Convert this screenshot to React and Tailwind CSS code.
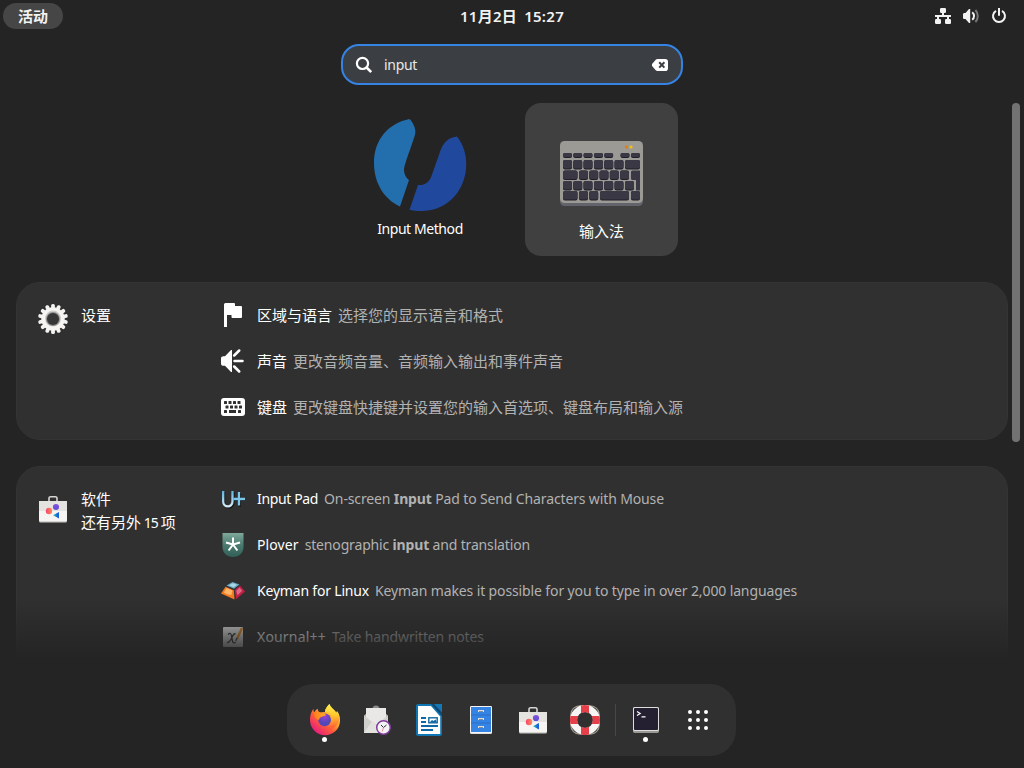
const FONT = "font-['Noto_Sans','Noto_Sans_CJK_SC',sans-serif]";

function SearchIcon() {
  return (
    <svg width="18" height="18" viewBox="0 0 18 18" fill="none" stroke="#fff" className="shrink-0">
      <circle cx="7.5" cy="7.4" r="5.6" strokeWidth="2.2" />
      <path d="M11.6 11.5 16.2 16.1" strokeWidth="2.6" />
    </svg>
  );
}

function ClearIcon() {
  return (
    <svg width="16" height="12" viewBox="0 0 16 12" className="shrink-0">
      <path d="M5.6 0h7.6A2.8 2.8 0 0 1 16 2.8v6.4a2.8 2.8 0 0 1-2.8 2.8H5.6a3 3 0 0 1-2.1-.9L.5 7.6a2 2 0 0 1 0-3.2l3-3.5A3 3 0 0 1 5.6 0Z" fill="#fff" />
      <path d="m7.2 3.2 5.2 5.4m0-5.4L7.2 8.6" stroke="#3b3e43" strokeWidth="2" />
    </svg>
  );
}

function NetworkIcon() {
  return (
    <svg width="16" height="16" viewBox="0 0 16 16" fill="#f2f2f2">
      <rect x="5" y="0" width="6" height="5" rx="1.2" />
      <path d="M7 4h2v3h7v2h-2v3h-2V9H4v3H2V9H0V7h7Z" />
      <rect x="0" y="11" width="6" height="5" rx="1.2" />
      <rect x="10" y="11" width="6" height="5" rx="1.2" />
    </svg>
  );
}

function VolumeIcon() {
  return (
    <svg width="16" height="16" viewBox="0 0 16 16" fill="none">
      <path d="M0 6.600C0 5.600.5 5 1.500 5H2.500L6 1h1.200v14H6L2.500 11h-1C.5 11 0 10.400 0 9.400Z" fill="#f2f2f2" />
      <path d="M9.200 4.200c2.400 2 2.400 5.600 0 7.600" stroke="#f2f2f2" strokeWidth="2" />
      <path d="M12.400 2c3.200 3.400 3.200 8.600 0 12" stroke="#777" strokeWidth="2" />
    </svg>
  );
}

function PowerIcon() {
  return (
    <svg width="16" height="16" viewBox="0 0 16 16" fill="none" stroke="#f2f2f2" strokeWidth="2">
      <path d="M5 2.900a6 6 0 1 0 6 0" />
      <path d="M8 .5V7" strokeLinecap="round" />
    </svg>
  );
}

function InputMethodIcon() {
  return (
    <svg width="96" height="96" viewBox="0 0 96 96">
      <path d="M37.500 3C41 6 44 13 43.300 17c-.4 5-11.300 31-11.300 37 0 4 2 8 5 10L28 90.500C12 83 2 67 2 47 2 23 17 7 37.500 3Z" fill="#236fae" />
      <path d="M85 20.500c6 7.500 9.200 17 9.200 27.500 0 25-17 46-43.200 47-5 .2-10-.3-13.500-1.200L46 69c7 .4 11-2.500 13.500-9L69 33c3-7 8.500-12 16-12.500Z" fill="#20499d" />
    </svg>
  );
}

const KEYS = [
  [3, 12, 9, 5], [13.200, 12, 9, 5], [23.500, 12, 9, 5], [34, 12, 9, 5], [44.200, 12, 9, 5], [60.500, 12, 9, 5], [71, 12, 9, 5],
  [3, 19, 9, 9.500], [13.200, 19, 9, 9.500], [23.500, 19, 9, 9.500], [34, 19, 9, 9.500], [44.200, 19, 9, 9.500], [54.500, 19, 9, 9.500], [65, 19, 15, 9.500],
  [3, 29.500, 14.500, 9.500], [19, 29.500, 9, 9.500], [29.200, 29.500, 9, 9.500], [39.500, 29.500, 9, 9.500], [49.800, 29.500, 9, 9.500], [60, 29.500, 9, 9.500],
  [3, 40, 9, 9.500], [13.200, 40, 9, 9.500], [23.500, 40, 9, 9.500], [34, 40, 9, 9.500], [44.200, 40, 9, 9.500], [54.500, 40, 9, 9.500], [65, 40, 9, 9.500],
  [3, 50, 14.500, 9.500], [19, 50, 9, 9.500], [29.200, 50, 9, 9.500], [40, 50, 29, 9.500], [71, 50, 9, 9.500],
];

function KeyboardAppIcon() {
  return (
    <svg width="83" height="66" viewBox="0 0 83 66">
      <rect y="4" width="83" height="61" rx="4.500" fill="#63636b" />
      <rect width="83" height="62" rx="4.500" fill="#9b9a95" />
      {KEYS.map(([x, y, w, h], i) => (
        <g key={i}>
          <rect x={x} y={y} width={w} height={h} rx="2" fill="#1f1d27" />
          <rect x={x} y={y} width={w} height={h - 1} rx="2" fill="#3a3844" />
        </g>
      ))}
      <path d="M72.500 29.500H80V49.500h-4V39H72.500a1.500 1.500 0 0 1-1.500-1.500V31a1.500 1.500 0 0 1 1.500-1.500Z" fill="#3a3844" />
      <circle cx="66.500" cy="6" r="1.600" fill="#f57900" />
      <circle cx="71" cy="6" r="1.600" fill="#f5c211" />
    </svg>
  );
}

function GearIcon() {
  const teeth = Array.from({ length: 14 }, (_, i) => i * (360 / 14));
  return (
    <svg width="32" height="32" viewBox="0 0 32 32">
      {teeth.map((a) => (
        <rect key={a} x="14.100" y="1" width="3.800" height="6" rx="1.600" fill="#f3f2f0" transform={`rotate(${a} 16 16)`} />
      ))}
      <circle cx="16" cy="16" r="11.700" fill="#f6f5f4" />
      <circle cx="16" cy="15.600" r="8" fill="#cfcdc9" />
      <circle cx="16" cy="16" r="7" fill="#8a898c" />
      <circle cx="16" cy="16.100" r="6" fill="#363636" />
    </svg>
  );
}

function SoftwareIcon() {
  return (
    <svg width="28" height="28" viewBox="0 0 28 28">
      <defs>
        <linearGradient id="sw-red"><stop stopColor="#f8466b" /><stop offset="1" stopColor="#ff8a58" /></linearGradient>
        <linearGradient id="sw-vio" x2="0" y2="1"><stop stopColor="#8352df" /><stop offset="1" stopColor="#604bd4" /></linearGradient>
        <linearGradient id="sw-blu"><stop stopColor="#25d0b2" /><stop offset=".7" stopColor="#1b63d6" /></linearGradient>
      </defs>
      <path d="M10 7V3A1.500 1.500 0 0 1 11.500 1.800h5A1.500 1.500 0 0 1 18 3V7" fill="none" stroke="#d5d4d1" strokeWidth="1.600" />
      <path d="M0 6h28v20a1.500 1.500 0 0 1-1.500 1.500h-25A1.500 1.500 0 0 1 0 26Z" fill="#c9c8c5" />
      <path d="M0 6h28v19a1.500 1.500 0 0 1-1.500 1.200h-25A1.500 1.500 0 0 1 0 25Z" fill="#f6f5f4" />
      <path d="M0 6h28v10H0Z" fill="#e4e3e0" />
      <circle cx="17" cy="12" r="3.100" fill="url(#sw-vio)" />
      <circle cx="10" cy="16" r="3.200" fill="url(#sw-red)" />
      <path d="M20 17v6.500l-6-3.300Z" fill="url(#sw-blu)" />
    </svg>
  );
}

function FlagIcon() {
  return (
    <svg width="24" height="24" viewBox="0 0 24 24" fill="#fff">
      <path d="M3 24V1.500A1.500 1.500 0 0 1 4.500 0H13a1 1 0 0 1 1 1v2h6a1 1 0 0 1 1 1v10a1 1 0 0 1-1 1h-8.500a1 1 0 0 1-1-1v-2H6v12Z" />
    </svg>
  );
}

function SoundIcon() {
  return (
    <svg width="24" height="24" viewBox="0 0 24 24" fill="#fff">
      <path d="M0 9.500C0 8 1 7.200 2.500 7.200H4l6-6.200h1v22h-1l-6-6.200H2.500C1 16.800 0 16 0 14.500Z" />
      <path d="m13.200 6.500 5-5M13.500 12h8M13.200 17.500l5 5" stroke="#fff" strokeWidth="2.500" strokeLinecap="round" />
    </svg>
  );
}

function KeyboardIcon() {
  const dots = [[3, 3], [7.500, 3], [12, 3], [16.500, 3], [4.500, 7.500], [9, 7.500], [13.500, 7.500], [18, 7.500], [3, 12], [17, 12]];
  return (
    <svg width="24" height="18" viewBox="0 0 24 18">
      <rect width="24" height="18" rx="3" fill="#fff" />
      {dots.map(([x, y]) => (
        <rect key={`${x}-${y}`} x={x} y={y} width="3" height="3" rx=".5" fill="#303030" />
      ))}
      <rect x="8" y="12" width="7" height="3" fill="#303030" />
    </svg>
  );
}

function InputPadIcon() {
  return (
    <svg width="24" height="24" viewBox="0 0 24 24" fill="none">
      <defs>
        <linearGradient id="pad" x2="0" y2="1"><stop stopColor="#5db5e0" /><stop offset="1" stopColor="#d4ecf8" /></linearGradient>
      </defs>
      <path d="M2.200 4v10.500c0 6.500 9.300 6.500 9.300 0V4M18 5v13.500M12 12h12" stroke="#111" strokeWidth="2.400" transform="translate(.8 .9)" />
      <path d="M2.200 4v10.500c0 6.500 9.300 6.500 9.300 0V4" stroke="url(#pad)" strokeWidth="2.300" />
      <path d="M18 5v13.500M12.500 12h11.500" stroke="#7cc8eb" strokeWidth="2.300" />
    </svg>
  );
}

function PloverIcon() {
  return (
    <svg width="24" height="24" viewBox="0 0 24 24" fill="none">
      <defs>
        <linearGradient id="plv" x2="0" y2="1"><stop stopColor="#7fa99b" /><stop offset=".5" stopColor="#4b7a6f" /><stop offset="1" stopColor="#2f5f57" /></linearGradient>
      </defs>
      <path d="M1.500 0h21V14c0 6-4.500 10-10.500 10S1.500 20 1.500 14Z" fill="url(#plv)" />
      <path d="M12 11.500V4.500M12 11.500l-7-2M12 11.500l7-2M12 11.500l-4.400 6M12 11.500l4.400 6" stroke="#fff" strokeWidth="2" />
    </svg>
  );
}

function KeymanIcon() {
  return (
    <svg width="24" height="24" viewBox="0 0 24 24">
      <path d="M5.500 6.500 11.500 3l7 2.500L13 9.800Z" fill="#6aa9c0" />
      <path d="m8 6.200 4-1.900 4 1.400-3.500 2.500Z" fill="#a8d8e6" />
      <path d="m4.500 7.800 8.300 3.400.7 9.300L0 14.500Z" fill="#f47a20" />
      <path d="m5.500 9 5.900 2.600-1 4.400-3.900-.5-3.600-2Z" fill="#fdb56a" />
      <path d="m19 6.500 5 6-9 7.800-1.300-9.400Z" fill="#c21f45" />
      <path d="m18.500 8.500 2.700 3.200-4.700 4.600-1.200-4.600Z" fill="#dc6a86" />
    </svg>
  );
}

function XournalIcon() {
  return (
    <svg width="24" height="24" viewBox="0 0 24 24" fill="none">
      <defs>
        <linearGradient id="xj" x2="0" y2="1"><stop stopColor="#f0f0f0" /><stop offset="1" stopColor="#d8d8d8" /></linearGradient>
      </defs>
      <rect x="2" y="2" width="20" height="20" rx="1" fill="url(#xj)" />
      <path d="M7 9.500c1.800-1.800 3-1.300 3.500 1.500l1 5c.5 2.500 1.800 2.500 3.200.8M14.500 8.800c-2.500-.5-3 2.700-4.300 5.200s-2 4-4.200 3.500" stroke="#333" strokeWidth="1.300" />
      <path d="M21 3 16 14" stroke="#f0901c" strokeWidth="2.300" />
      <path d="m16 13-1.200 3" stroke="#444" strokeWidth="1.300" />
    </svg>
  );
}

function FirefoxIcon() {
  return (
    <svg width="32" height="32" viewBox="0 0 32 32">
      <defs>
        <linearGradient id="ff" x1=".85" y1=".1" x2=".15" y2=".95"><stop stopColor="#fff44f" /><stop offset=".3" stopColor="#ffb52e" /><stop offset=".6" stopColor="#ff5a3c" /><stop offset="1" stopColor="#e31587" /></linearGradient>
        <linearGradient id="ffy" x2="0" y2="1"><stop stopColor="#fff44f" /><stop offset=".45" stopColor="#ffc52d" /><stop offset="1" stopColor="#ff5139" /></linearGradient>
        <linearGradient id="ffo"><stop stopColor="#ff7a1f" /><stop offset="1" stopColor="#ffb020" /></linearGradient>
        <radialGradient id="ffg" cy=".25"><stop stopColor="#9b40d8" /><stop offset="1" stopColor="#5348b8" /></radialGradient>
      </defs>
      <path d="M20.500 0c-1.500 2-4.500 4.500-4.500 8l-5 .5c-1.500-.8-2.200-2-2.300-3.700C7 5.500 6 7 5.500 8.300 4.300 7.600 4.500 6 4.500 5 2.500 7 1 11.500 1 16c0 8.500 6.800 15.200 15 15.200S31 25 31 16.500c0-4-1.200-6.900-3-9.200l-.8 1.800C26 5.500 21.500 4 20.500 0Z" fill="url(#ff)" />
      <path d="M20.500 0c-2 2-4.500 4.500-4.500 8 5 0 8.300 4 8.300 8.500S21 24.500 16 25c8 2 13-3.500 14.500-10 .3-3-1-5.800-2.500-7.700l-.8 1.800C26 5.500 21.500 4 20.500 0Z" fill="url(#ffy)" />
      <circle cx="15.600" cy="15.800" r="6.400" fill="url(#ffg)" />
      <path d="M5 8.300c2-.8 4.200-.6 6 .1 2.500 0 5.300.6 6.100 2.900-1.600.5-3.200 1-4.700 1.700-1.500.5-2.500 1.500-2.200 2.900C7 15.500 4.500 12.500 5 8.300Z" fill="url(#ffo)" />
    </svg>
  );
}

function MailIcon() {
  return (
    <svg width="32" height="32" viewBox="0 0 32 32" className="overflow-visible">
      <g transform="translate(1 -1)">
        <path d="M2 12.500 14 3l12 9.500V28H2Z" fill="#b5b4b1" />
        <circle cx="14" cy="6" r="3.500" fill="#8a8986" />
        <rect x="4" y="5" width="20" height="20" fill="#e9e8e6" />
        <path d="M2 12.500V30h24V12.500L14 22Z" fill="#d0cfcb" />
        <path d="m2 30 8-11.500 4 3 4-3 8 11.500Z" fill="#e2e1de" />
        <circle cx="21.500" cy="24.500" r="6.800" fill="#f4f3f5" stroke="#813d9c" strokeWidth="1.500" />
        <path d="m19 22 2.500 2.500 3-2.500" stroke="#2e2e33" strokeWidth="1" fill="none" />
        <path d="m21.500 24.500-1.300 4" stroke="#e0787f" strokeWidth=".8" />
      </g>
    </svg>
  );
}

function WriterIcon() {
  return (
    <svg width="32" height="32" viewBox="0 0 32 32">
      <path d="M5 0h14l10 12v18a2 2 0 0 1-2 2H5a2 2 0 0 1-2-2V2a2 2 0 0 1 2-2Z" fill="#0f75b2" />
      <path d="M5 2h13l9.200 10.500V30H5Z" fill="#fff" />
      <path d="M18 0h3l8 8.500V12Z" fill="#0e4a73" />
      <path d="M21 0h8v8.500Z" fill="#1478b6" />
      <path d="M8 14h5M8 18h5M8 22h17M8 26h12" stroke="#0e68a3" strokeWidth="1.800" />
      <rect x="15.800" y="13.800" width="8.400" height="5" fill="#fff" stroke="#0e68a3" strokeWidth="1.400" />
      <path d="m16.500 18.500 2.500-2.500 1.500 1 2-1.500 1.500 3Z" fill="#0e68a3" />
    </svg>
  );
}

function FilesIcon() {
  return (
    <svg width="32" height="32" viewBox="0 0 32 32">
      <rect x="5" y="2" width="22" height="28" rx="1.500" fill="#deddda" />
      <rect x="5" y="2" width="22" height="27" rx="1.500" fill="#f6f5f4" />
      <rect x="6" y="3" width="20" height="25" fill="#3584e4" />
      <path d="M6 11h20M6 19h20" stroke="#2a6fc9" />
      {[6, 14, 22].map((y) => (
        <g key={y}>
          <rect x="13" y={y} width="6" height="2" fill="#deddda" />
          <rect x="14" y={y + 1} width="4" height="1" fill="#7e8ca0" />
        </g>
      ))}
    </svg>
  );
}

function HelpIcon() {
  return (
    <svg width="32" height="32" viewBox="0 0 32 32" fill="none">
      <rect x="1.800" y="1.800" width="28.400" height="28.400" rx="9" stroke="#a29b90" strokeWidth="1.200" />
      <circle cx="16" cy="16" r="11.500" stroke="#f6f5f4" strokeWidth="7" />
      <path fill="#e5404a" d="M12 1.400q4-1 8 0V9.300q-4-2-8 0ZM12 30.600q4 1 8 0V22.700q-4 2-8 0ZM1.400 12q-1 4 0 8H9.300q-2-4 0-8ZM30.600 12q1 4 0 8H22.700q2-4 0-8Z" />
    </svg>
  );
}

function TerminalIcon() {
  return (
    <svg width="32" height="32" viewBox="0 0 32 32" fill="none">
      <rect x="3" y="3" width="26" height="26" rx="1.800" fill="#9a9996" />
      <rect x="3" y="3" width="26" height="24" rx="1.800" fill="#deddda" />
      <rect x="4" y="4" width="24" height="22" rx="1" fill="#241f31" />
      <path d="m7 7.500 3.200 2L7 11.500M11.500 12.800h4" stroke="#fff" strokeWidth="1.200" />
    </svg>
  );
}

function AppsIcon() {
  return (
    <svg width="32" height="32" viewBox="0 0 32 32" fill="#fff">
      {[8, 16, 24].map((y) => [8, 16, 24].map((x) => <circle key={`${x}-${y}`} cx={x} cy={y} r="2" />))}
    </svg>
  );
}

function Row({ icon, title, cls, children, descCls, textCls }) {
  return (
    <li className="flex h-[46px] items-center">
      <span className="flex size-6 shrink-0 items-center justify-center">{icon}</span>
      <span className={`ml-3 flex gap-1.5 whitespace-pre ${textCls || ""}`}>
        <span className={`text-white ${cls || ""}`}>{title}</span>
        <span className={`text-[#b2b2b2] ${descCls || ""}`}>{children}</span>
      </span>
    </li>
  );
}

function DockItem({ icon, running }) {
  return (
    <div className="flex w-8 flex-col items-start">
      {icon}
      <span className={`ml-[13px] mt-[1px] size-[5px] rounded-full ${running ? "bg-white" : ""}`} />
    </div>
  );
}

export default function App() {
  return (
    <div className={`relative flex h-[768px] w-[1024px] flex-col overflow-hidden bg-[#242424] text-[15px] leading-[23px] text-white ${FONT}`}>
      <header className="grid h-8 shrink-0 grid-cols-3 items-center font-bold text-[#f2f2f2]">
        <div className="ml-[3px] flex h-[26px] w-[60px] items-center justify-center rounded-full bg-[#464646]">活动</div>
        <div className="flex justify-center gap-[7px] whitespace-nowrap font-semibold tracking-[0.28px]">
          <span>11月2日</span>
          <span>15:27</span>
        </div>
        <div className="flex items-center justify-end gap-3 pr-[17px]">
          <NetworkIcon />
          <VolumeIcon />
          <PowerIcon />
        </div>
      </header>

      <div className="mx-auto mt-3 flex h-[41px] w-[342px] shrink-0 items-center rounded-[18px] border-2 border-[#3584e4] bg-[#3b3e43] pl-3 pr-[13px]">
        <SearchIcon />
        <span className="ml-[11px] flex-1 text-[14px] tracking-[-0.3px] text-[#e8e8e8]">input</span>
        <ClearIcon />
      </div>

      <main className="relative mt-[18px] h-[557px] overflow-hidden px-4">
        <div className="flex justify-center gap-[29px] pr-[3px]">
          <div className="flex h-[153px] w-[153px] flex-col items-center pt-[13px]">
            <InputMethodIcon />
            <span className="mt-[5px] pl-px text-[14px] tracking-[-0.42px]">Input Method</span>
          </div>
          <div className="flex h-[153px] w-[153px] flex-col items-center rounded-[16px] bg-[#404040] pt-[38px]">
            <KeyboardAppIcon />
            <span className="mt-[13px]">输入法</span>
          </div>
        </div>

        <section className="mt-[26px] flex h-[158px] rounded-[24px] border border-[#343434] bg-[#303030]">
          <div className="flex w-[204px] pl-5 pt-[20px]">
            <GearIcon />
            <div className="ml-3 mt-px">设置</div>
          </div>
          <ul className="pt-[9px]">
            <Row icon={<FlagIcon />} title="区域与语言">选择您的显示语言和格式</Row>
            <Row icon={<SoundIcon />} title="声音">更改音频音量、音频输入输出和事件声音</Row>
            <Row icon={<KeyboardIcon />} title="键盘">更改键盘快捷键并设置您的输入首选项、键盘布局和输入源</Row>
          </ul>
        </section>

        <section className="mt-[26px] flex h-[204px] rounded-t-[24px] border border-[#343434] bg-[#303030]">
          <div className="flex w-[204px] pl-[22px] pt-[28px]">
            <SoftwareIcon />
            <div className="-mt-[7px] ml-[14px]">
              <div>软件</div>
              <div>还有另外<span className="text-[14px] tracking-[-0.9px]"> 15 </span>项</div>
            </div>
          </div>
          <ul className="pt-[9px] text-[14px]">
            <Row textCls="-mt-[2px]" cls="tracking-[-0.36px]" descCls="tracking-[-0.135px]" icon={<InputPadIcon />} title="Input Pad">On-screen <b>Input</b> Pad to Send Characters with Mouse</Row>
            <Row textCls="-mt-[2px]" cls="tracking-[0.1px]" descCls="tracking-[-0.16px]" icon={<PloverIcon />} title="Plover">stenographic <b>input</b> and translation</Row>
            <Row textCls="-mt-[2px]" cls="tracking-[-0.19px]" descCls="tracking-[-0.125px]" icon={<KeymanIcon />} title="Keyman for Linux">Keyman makes it possible for you to type in over 2,000 languages</Row>
            <Row textCls="-mt-[2px]" cls="tracking-[0.18px]" descCls="tracking-[-0.13px]" icon={<XournalIcon />} title="Xournal++">Take handwritten notes</Row>
          </ul>
        </section>

        <div className="absolute inset-x-0 bottom-0 h-[62px] bg-gradient-to-b from-[#242424]/0 to-[#242424]" />
      </main>

      <div className="absolute right-1 top-[103px] h-[339px] w-2 rounded-full bg-[#727272]" />

      <nav className="ml-[287px] mt-6 flex h-[72px] w-[449px] shrink-0 items-start gap-5 rounded-[26px] bg-[#303030] pl-[22px] pt-5">
        <DockItem icon={<FirefoxIcon />} running />
        <DockItem icon={<MailIcon />} />
        <DockItem icon={<WriterIcon />} />
        <DockItem icon={<FilesIcon />} />
        <DockItem icon={<div className="flex size-8 items-center justify-center"><SoftwareIcon /></div>} />
        <DockItem icon={<HelpIcon />} />
        <div className="-mx-[6px] h-8 w-px bg-[#474747]" />
        <DockItem icon={<TerminalIcon />} running />
        <DockItem icon={<AppsIcon />} />
      </nav>
    </div>
  );
}
